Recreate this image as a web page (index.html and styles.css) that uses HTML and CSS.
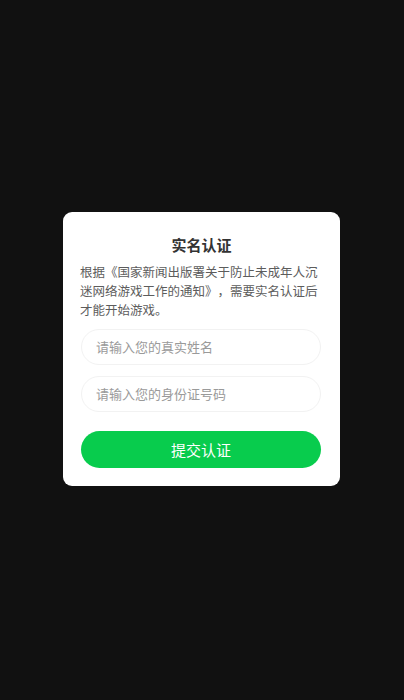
FILE: index.html
```html
<!DOCTYPE html>
<html lang="zh">
<head>
<meta charset="utf-8">
<link rel="stylesheet" href="styles.css">
</head>
<body>
<div class="screen">
  <div class="card">
    <h1 class="title">实名认证</h1>
    <p class="desc">根据《国家新闻出版署关于防止未成年人沉迷网络游戏工作的通知》，需要实名认证后才能开始游戏。</p>
    <div class="field"><span class="ph">请输入您的真实姓名</span></div>
    <div class="field"><span class="ph">请输入您的身份证号码</span></div>
    <div class="btn">提交认证</div>
  </div>
</div>
</body>
</html>
```

FILE: styles.css
```css
html, body {
  margin: 0;
  padding: 0;
  background: #111111;
}
.screen {
  width: 404px;
  height: 700px;
  box-sizing: border-box;
  padding-left: 63px;
  display: flex;
  align-items: center;
  justify-content: flex-start;
  font-family: "Noto Sans CJK SC", "Noto Sans", sans-serif;
}
.card {
  width: 277px;
  height: 274px;
  box-sizing: border-box;
  margin-top: -3px;
  background: #fff;
  border-radius: 9px;
  padding: 21px 17px 0 17px;
  display: flex;
  flex-direction: column;
}
.title {
  margin: 0;
  font-size: 15px;
  font-weight: 700;
  color: #333;
  text-align: center;
  line-height: 24px;
}
.desc {
  margin: 5px 0 0 0;
  font-size: 12.5px;
  line-height: 19px;
  color: #5c5c5c;
  text-spacing-trim: space-all;
}
.field {
  box-sizing: border-box;
  margin: 10px 2px 0 1px;
  height: 36px;
  border: 1px solid #f2f2f2;
  border-radius: 18px;
  display: flex;
  align-items: center;
  padding-left: 14px;
}
.field + .field {
  margin-top: 11px;
}
.ph {
  font-size: 13px;
  color: #9a9a9a;
  text-spacing-trim: space-all;
}
.btn {
  margin: 19px 2px 0 1px;
  height: 37px;
  border-radius: 19px;
  background: #08cc4d;
  color: #fff;
  font-size: 15px;
  display: flex;
  align-items: center;
  justify-content: center;
}
```
